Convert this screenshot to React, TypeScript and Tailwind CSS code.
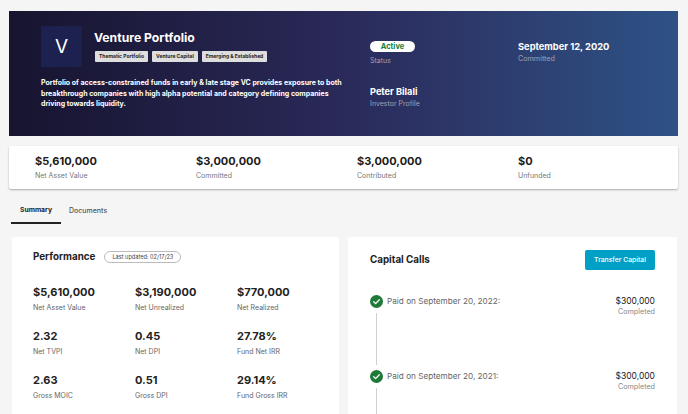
const font = { fontFamily: '"Inter", "Open Sans", sans-serif' };

const stats = [
  ["$5,610,000", "Net Asset Value"],
  ["$3,000,000", "Committed"],
  ["$3,000,000", "Contributed"],
  ["$0", "Unfunded"],
];

const perf = [
  ["$5,610,000", "Net Asset Value"],
  ["$3,190,000", "Net Unrealized"],
  ["$770,000", "Net Realized"],
  ["2.32", "Net TVPI"],
  ["0.45", "Net DPI"],
  ["27.78%", "Fund Net IRR"],
  ["2.63", "Gross MOIC"],
  ["0.51", "Gross DPI"],
  ["29.14%", "Fund Gross IRR"],
];

const calls = [
  "Paid on September 20, 2022:",
  "Paid on September 20, 2021:",
];

function Check() {
  return (
    <svg width="13" height="13" viewBox="0 0 13 13" className="shrink-0">
      <circle cx="6.5" cy="6.5" r="6.5" fill="#1f7a3a" />
      <path d="M3.7 6.8 5.6 8.6 9.3 4.8" fill="none" stroke="#fff" strokeWidth="1.3" strokeLinecap="round" strokeLinejoin="round" />
    </svg>
  );
}

function Tag({ children }: { children: string }) {
  return (
    <span className="flex h-[11px] items-center rounded-[1px] bg-[#dedede] px-[4px] text-[5px] font-bold text-[#222]">
      {children}
    </span>
  );
}

export default function App() {
  return (
    <div style={font} className="h-[414px] w-[688px] overflow-hidden bg-[#f5f5f5] pl-[9px] pr-[10px] pt-[11px]">
      <div className="flex h-[125px] bg-gradient-to-r from-[#17142f] via-[#2a2a5a] to-[#2d5286] pl-[32px] pt-[15px] text-white">
        <div className="w-[329px]">
          <div className="flex gap-[12px]">
            <div className="flex h-[41px] w-[41px] items-center justify-center bg-[#1d2150] text-[19px] leading-none">V</div>
            <div className="pt-[4px]">
              <div className="text-[12.2px] font-bold leading-[16px]">Venture Portfolio</div>
              <div className="ml-[1px] mt-[5px] flex gap-[4px]">
                <Tag>Thematic Portfolio</Tag>
                <Tag>Venture Capital</Tag>
                <Tag>Emerging &amp; Established</Tag>
              </div>
            </div>
          </div>
          <p className="mt-[11px] w-[305px] text-[7px] font-bold leading-[10.5px]">
            Portfolio of access-constrained funds in early &amp; late stage VC provides exposure to both breakthrough companies with high alpha potential and category defining companies driving towards liquidity.
          </p>
        </div>
        <div className="w-[148px] pt-[15px]">
          <div className="flex h-[11px] w-[45px] items-center justify-center rounded-full bg-white text-[7.5px] font-bold text-[#14803c]">Active</div>
          <div className="mt-[4px] text-[7px] leading-[10px] text-[#a0a0b0]">Status</div>
          <div className="mt-[20px] text-[9.2px] font-bold leading-[12px]">Peter Bilali</div>
          <div className="mt-[1px] text-[7px] leading-[10px] text-[#a0a0b0]">Investor Profile</div>
        </div>
        <div className="pt-[14px]">
          <div className="text-[9.3px] font-bold leading-[13px]">September 12, 2020</div>
          <div className="mt-[1px] text-[7.2px] leading-[10px] text-[#a0a0b0]">Committed</div>
        </div>
      </div>

      <div className="mt-[10px] grid h-[43px] grid-cols-[161px_161px_161px_1fr] items-start rounded-[2px] bg-white pl-[26px] pt-[8px] shadow-[0_1px_2px_rgba(0,0,0,0.3)]">
        {stats.map(([v, l]) => (
          <div key={l + v}>
            <div className="text-[11px] font-bold leading-[14px] text-[#1c1c1c]">{v}</div>
            <div className="mt-[1.5px] text-[7px] leading-[11px] text-[#777]">{l}</div>
          </div>
        ))}
      </div>

      <div className="ml-[2px] mt-[10px] flex h-[25px] items-center text-[6.8px] font-bold">
        <div className="flex h-[25px] w-[50px] items-center justify-center border-b-2 border-[#222] text-[#222]">Summary</div>
        <div className="ml-[8px] text-[7px] font-medium text-[#555]">Documents</div>
      </div>

      <div className="ml-[3px] mt-[13px] flex gap-[9px]">
        <div className="h-[200px] w-[327px] rounded-[2px] bg-white pl-[21px] pt-[13px]">
          <div className="flex items-center gap-[9px]">
            <div className="text-[9.8px] font-bold leading-[14px] text-[#222]">Performance</div>
            <div className="flex h-[12px] w-[77px] items-center justify-center rounded-full border border-[#bbb] text-[5.6px] text-[#444]">Last updated: 02/17/23</div>
          </div>
          <div className="mt-[20px] grid grid-cols-[102px_102px_1fr] gap-y-[15px]">
            {perf.map(([v, l]) => (
              <div key={l}>
                <div className="text-[11px] font-bold leading-[16px] text-[#222]">{v}</div>
                <div className="mt-[3px] text-[7px] leading-[10px] text-[#666]">{l}</div>
              </div>
            ))}
          </div>
        </div>

        <div className="h-[200px] w-[329px] rounded-[2px] bg-white pl-[22px] pr-[22px] pt-[13px]">
          <div className="flex items-center justify-between">
            <div className="pt-[1px] text-[9.8px] font-bold text-[#222]">Capital Calls</div>
            <div className="flex h-[20px] w-[70px] items-center justify-center rounded-[2px] bg-[#00a0c6] text-[6.8px] font-medium text-white">Transfer Capital</div>
          </div>
          <div className="mt-[25px] flex flex-col">
            {calls.map((c) => (
              <div key={c} className="flex h-[74.5px] justify-between">
                <div className="flex gap-[4px]">
                  <div className="flex w-[13px] flex-col items-center">
                    <Check />
                    <div className="mt-[5px] h-[52px] w-px bg-[#d0d0d0]" />
                  </div>
                  <div className="text-[8.2px] leading-[12px] text-[#666]">{c}</div>
                </div>
                <div className="text-right">
                  <div className="text-[8.5px] leading-[12px] text-[#222]">$300,000</div>
                  <div className="text-[7.2px] leading-[9px] text-[#888]">Completed</div>
                </div>
              </div>
            ))}
          </div>
        </div>
      </div>
    </div>
  );
}
